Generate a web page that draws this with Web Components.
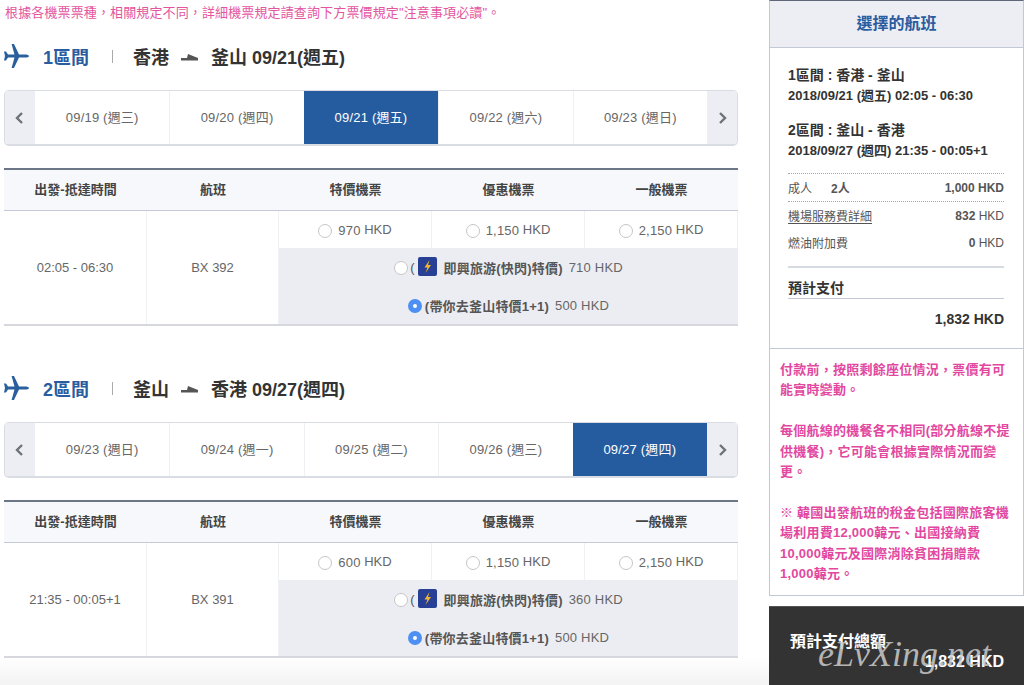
<!DOCTYPE html>
<html lang="zh-Hant">
<head>
<meta charset="utf-8">
<title>選擇的航班</title>
<style>
  html, body { margin: 0; padding: 0; background: #fff; }
  body { font-family: "Liberation Sans", "Noto Sans CJK TC", sans-serif; overflow: hidden; }
</style>
</head>
<body>
<booking-page>
  <fare-note slot="main">根據各機票票種，相關規定不同，詳細機票規定請查詢下方票價規定"注意事項必讀"。</fare-note>
  <flight-section slot="main" index="1" from="香港" to="釜山" day="09/21(週五)"
    dates='["09/19 (週三)","09/20 (週四)","09/21 (週五)","09/22 (週六)","09/23 (週日)"]' active="2"
    time="02:05 - 06:30" flight="BX 392" fares='["970","1,150","2,150"]' flash="710" promo="500"></flight-section>
  <flight-section slot="main" index="2" from="釜山" to="香港" day="09/27(週四)"
    dates='["09/23 (週日)","09/24 (週一)","09/25 (週二)","09/26 (週三)","09/27 (週四)"]' active="4"
    time="21:35 - 00:05+1" flight="BX 391" fares='["600","1,150","2,150"]' flash="360" promo="500"></flight-section>
  <summary-panel slot="side"></summary-panel>
  <notice-panel slot="side">付款前，按照剩餘座位情況，票價有可<br>能實時變動。<br><br>每個航線的機餐各不相同(部分航線不提<br>供機餐)，它可能會根據實際情況而變<br>更。<br><br>※ 韓國出發航班的稅金包括國際旅客機<br>場利用費12,000韓元、出國接納費<br>10,000韓元及國際消除貧困捐贈款<br>1,000韓元。</notice-panel>
  <total-panel slot="side"></total-panel>
</booking-page>

<script>
class BookingPage extends HTMLElement {
  constructor() {
    super();
    this.attachShadow({ mode: "open" });
    this.shadowRoot.innerHTML = `
      <style>
        :host {
          display: grid;
          grid-template-columns: 734px 255px;
          column-gap: 31px;
          padding-left: 4px;
          height: 685px;
          box-sizing: border-box;
          overflow: hidden;
          background: linear-gradient(to bottom, #fff 657px, #f3f3f3 685px);
        }
        .side { display: flex; flex-direction: column; height: 685px; background: #fff; }
      </style>
      <div class="main"><slot name="main"></slot></div>
      <div class="side"><slot name="side"></slot></div>
    `;
  }
}

class FareNote extends HTMLElement {
  constructor() {
    super();
    this.attachShadow({ mode: "open" });
    this.shadowRoot.innerHTML = `
      <style>
        :host {
          display: block;
          height: 26px;
          padding-left: 1px;
          box-sizing: border-box;
          font-size: 13px;
          line-height: 26px;
          letter-spacing: .13px;
          color: #e4559f;
          white-space: nowrap;
        }
      </style>
      <slot></slot>
    `;
  }
}

class DateStrip extends HTMLElement {
  constructor() {
    super();
    this.attachShadow({ mode: "open" });
  }

  connectedCallback() {
    const dates = JSON.parse(this.getAttribute("dates") || "[]");
    const active = Number(this.getAttribute("active"));
    this.shadowRoot.innerHTML = `
      <style>
        :host {
          display: grid;
          grid-template-columns: 30px repeat(5, 1fr) 30px;
          height: 56px;
          box-sizing: border-box;
          border: 1px solid #d9dce3;
          border-bottom-width: 2px;
          border-radius: 5px;
          overflow: hidden;
          font-size: 13px;
          color: #666;
        }
        .arrow { display: flex; align-items: center; justify-content: center; background: #eceef3; }
        .arrow.prev { padding-right: 2px; }
        .arrow.next { padding-left: 3px; }
        .day {
          display: flex;
          align-items: center;
          justify-content: center;
          padding-bottom: 2px;
          letter-spacing: .2px;
          border-left: 1px solid #eef0f3;
        }
        .arrow + .day { border-left: 0; }
        .on { background: #255c9f; color: #fff; border-left: 0; }
      </style>
      <div class="arrow prev"><svg width="10" height="14" viewBox="0 0 10 14"><path d="M8 2 3 7l5 5" fill="none" stroke="#6e737a" stroke-width="2.4"/></svg></div>
      ${dates
        .map((d, i) => `<div class="day ${i === active ? "on" : ""}">${d}</div>`)
        .join("")}
      <div class="arrow next"><svg width="10" height="14" viewBox="0 0 10 14"><path d="M2 2l5 5-5 5" fill="none" stroke="#6e737a" stroke-width="2.4"/></svg></div>
    `;
  }
}

class FareRadio extends HTMLElement {
  constructor() {
    super();
    this.attachShadow({ mode: "open" });
    this.shadowRoot.innerHTML = `
      <style>
        :host {
          display: inline-block;
          width: 14px;
          height: 14px;
          margin-top: 2px;
          box-sizing: border-box;
          flex: none;
          border: 1px solid #c6c6c6;
          border-radius: 50%;
          background: #fff;
        }
        :host([checked]) {
          border: 5px solid #4d8ff2;
        }
      </style>
    `;
  }
}

class FareTable extends HTMLElement {
  constructor() {
    super();
    this.attachShadow({ mode: "open" });
  }

  connectedCallback() {
    const fares = JSON.parse(this.getAttribute("fares") || "[]");
    const bolt = `<svg class="bolt" width="19" height="19" viewBox="0 0 19 19"><rect width="19" height="19" rx="2" fill="#273f94"/><path d="M11.500 3 6.500 10.500h3L7.500 16l5.500-8h-3z" fill="#f3b62f"/></svg>`;
    this.shadowRoot.innerHTML = `
      <style>
        :host {
          display: grid;
          grid-template-columns: 143px 132px repeat(3, 1fr);
          grid-template-rows: 41px 37px 1fr;
          height: 158px;
          box-sizing: border-box;
          border-top: 2px solid #6b7686;
          border-bottom: 2px solid #d6d8dd;
          font-size: 13px;
          color: #666;
        }
        .th {
          display: flex;
          align-items: center;
          justify-content: center;
          padding-bottom: 3px;
          background: #f7f8fb;
          border-bottom: 1px solid #c3c9d6;
          font-weight: bold;
          color: #444;
        }
        .span {
          grid-row: 2 / 4;
          display: flex;
          align-items: center;
          justify-content: center;
          border-right: 1px solid #f0f1f4;
        }
        .fare {
          display: flex;
          align-items: center;
          justify-content: center;
          gap: 6px;
          border-right: 1px solid #f0f1f4;
        }
        .fare:last-of-type { border-right: 0; }
        .num { vertical-align: -1px; letter-spacing: .2px; }
        .extra {
          grid-column: 3 / 6;
          display: flex;
          flex-direction: column;
          background: #ecedf2;
        }
        .opt {
          flex: 1;
          display: flex;
          align-items: center;
          justify-content: center;
          white-space: nowrap;
        }
        .opt b { color: #555; letter-spacing: .2px; }
        .bolt { margin: 0 7px 1px 3px; flex: none; }
        .price { margin-left: 6px; letter-spacing: .2px; }
        .paren { margin-left: 2px; color: #555; }
      </style>
      <div class="th">出發-抵達時間</div>
      <div class="th">航班</div>
      <div class="th">特價機票</div>
      <div class="th">優惠機票</div>
      <div class="th">一般機票</div>
      <div class="span">${this.getAttribute("time")}</div>
      <div class="span">${this.getAttribute("flight")}</div>
      ${fares
        .map(
          (f) => `<div class="fare"><fare-radio></fare-radio><span><span class="num">${f}</span> HKD</span></div>`
        )
        .join("")}
      <div class="extra">
        <div class="opt"><fare-radio></fare-radio><span class="paren">(</span>${bolt}<b>即興旅游(快閃)特價)</b><span class="price">${this.getAttribute("flash")} HKD</span></div>
        <div class="opt"><fare-radio checked></fare-radio><b style="margin-left:3px">(帶你去釜山特價1+1)</b><span class="price">${this.getAttribute("promo")} HKD</span></div>
      </div>
    `;
  }
}

class FlightSection extends HTMLElement {
  constructor() {
    super();
    this.attachShadow({ mode: "open" });
  }

  connectedCallback() {
    const attr = (name) => this.getAttribute(name) || "";
    this.shadowRoot.innerHTML = `
      <style>
        :host { display: block; padding-top: 11px; margin-bottom: 32px; }
        .head {
          display: flex;
          align-items: center;
          height: 38px;
          margin-bottom: 15px;
          font-size: 18px;
          font-weight: bold;
          color: #333;
          white-space: nowrap;
        }
        .plane { flex: none; margin-right: 14px; }
        .no { color: #2a5d9f; width: 69px; }
        .sep { width: 1px; height: 13px; background: #aaa; margin-right: 20px; }
        .go { flex: none; margin: 2px 13px 0 12px; }
        date-strip { margin-bottom: 22px; }
      </style>
      <div class="head">
        <svg class="plane" width="25" height="24" viewBox="0 0 25 24"><path d="M25 12c0-1-2-1.600-4-1.600h-6L10 0H7.600l2.900 10.400H4L2 7.500H0L1 12 0 16.500h2l2-2.900h6.500L7.600 24H10l5-10.400h6c2 0 4-.6 4-1.600z" fill="#2a5f9e"/></svg>
        <span class="no">${attr("index")}區間</span>
        <span class="sep"></span>
        <span>${attr("from")}</span>
        <svg class="go" width="17" height="7" viewBox="0 0 17 7"><path d="M0 4h6l1-4 10 4v2.500H0z" fill="#555"/></svg>
        <span>${attr("to")} ${attr("day")}</span>
      </div>
      <date-strip dates='${attr("dates")}' active="${attr("active")}"></date-strip>
      <fare-table time="${attr("time")}" flight="${attr("flight")}" fares='${attr("fares")}' flash="${attr("flash")}" promo="${attr("promo")}"></fare-table>
    `;
  }
}

class SummaryPanel extends HTMLElement {
  constructor() {
    super();
    this.attachShadow({ mode: "open" });
    this.shadowRoot.innerHTML = `
      <style>
        :host {
          display: block;
          height: 349px;
          flex: none;
          box-sizing: border-box;
          border-left: 1px solid #c2c9d6;
          border-right: 1px solid #c2c9d6;
          border-top: 1px solid #5e6878;
          border-bottom: 1px solid #c2c9d6;
          font-size: 12px;
          color: #555;
        }
        h2 {
          margin: 0;
          height: 47px;
          box-sizing: border-box;
          padding-bottom: 5px;
          display: flex;
          align-items: center;
          justify-content: center;
          background: #eceef4;
          border-bottom: 1px solid #c2c9d6;
          font-size: 16px;
          color: #2a5d9f;
        }
        .body { padding: 0 19px 0 18px; }
        .leg { font-weight: bold; color: #333; }
        .leg div:first-child { font-size: 14px; line-height: 20px; }
        .leg div:last-child { font-size: 13px; line-height: 22px; }
        .leg.one { padding-top: 17px; }
        .leg.two { padding-top: 13px; }
        .row { display: flex; justify-content: space-between; align-items: center; height: 27px; }
        .row b { color: #555; }
        .dots { border-top: 1px dotted #a9a9a9; }
        .first { margin-top: 11px; }
        .adult b:first-of-type { margin-left: 19px; margin-right: auto; }
        u { text-underline-offset: 2px; }
        .line { border-top: 2px solid #d6dae1; margin-top: 10px; }
        .pay {
          height: 30px;
          display: flex;
          align-items: flex-end;
          line-height: 20px;
          border-bottom: 1px solid #c2c9d6;
          font-size: 14px;
          font-weight: bold;
          color: #333;
        }
        .sum { text-align: right; font-size: 14px; font-weight: bold; color: #333; line-height: 40px; }
      </style>
      <h2>選擇的航班</h2>
      <div class="body">
        <div class="leg one"><div>1區間 : 香港 - 釜山</div><div>2018/09/21 (週五) 02:05 - 06:30</div></div>
        <div class="leg two"><div>2區間 : 釜山 - 香港</div><div>2018/09/27 (週四) 21:35 - 00:05+1</div></div>
        <div class="dots first"></div>
        <div class="row adult"><span>成人</span><b>2人</b><b>1,000 HKD</b></div>
        <div class="dots"></div>
        <div class="row"><u>機場服務費詳細</u><span><b>832</b> HKD</span></div>
        <div class="row"><span>燃油附加費</span><span><b>0</b> HKD</span></div>
        <div class="line"></div>
        <div class="pay">預計支付</div>
        <div class="sum">1,832 HKD</div>
      </div>
    `;
  }
}

class NoticePanel extends HTMLElement {
  constructor() {
    super();
    this.attachShadow({ mode: "open" });
    this.shadowRoot.innerHTML = `
      <style>
        :host {
          display: block;
          flex: none;
          height: 247px;
          box-sizing: border-box;
          padding: 11px 0 0 10px;
          border-left: 1px solid #c2c9d6;
          border-right: 1px solid #c2c9d6;
          border-bottom: 1px solid #c2c9d6;
          font-size: 13px;
          font-weight: bold;
          line-height: 20.4px;
          letter-spacing: .25px;
          color: #e2489f;
          white-space: nowrap;
        }
      </style>
      <slot></slot>
    `;
  }
}

class TotalPanel extends HTMLElement {
  constructor() {
    super();
    this.attachShadow({ mode: "open" });
    this.shadowRoot.innerHTML = `
      <style>
        :host {
          display: block;
          position: relative;
          flex: none;
          margin-top: 10px;
          height: 80px;
          box-sizing: border-box;
          padding: 25px 20px 0 21px;
          background: #333;
          border-top: 1px solid #555;
          font-size: 16px;
          font-weight: bold;
          color: #fff;
          line-height: 20px;
          overflow: hidden;
        }
        .amount { text-align: right; }
        .mark {
          position: absolute;
          left: 49px;
          top: 26px;
          font: italic 400 36px "Liberation Serif", serif;
          color: rgba(205, 205, 205, .85);
          white-space: nowrap;
        }
      </style>
      <div>預計支付總額</div>
      <div class="amount">1,832 HKD</div>
      <div class="mark">eLvXing.net</div>
    `;
  }
}

customElements.define("booking-page", BookingPage);
customElements.define("fare-note", FareNote);
customElements.define("date-strip", DateStrip);
customElements.define("fare-radio", FareRadio);
customElements.define("fare-table", FareTable);
customElements.define("flight-section", FlightSection);
customElements.define("summary-panel", SummaryPanel);
customElements.define("notice-panel", NoticePanel);
customElements.define("total-panel", TotalPanel);
</script>
</body>
</html>
